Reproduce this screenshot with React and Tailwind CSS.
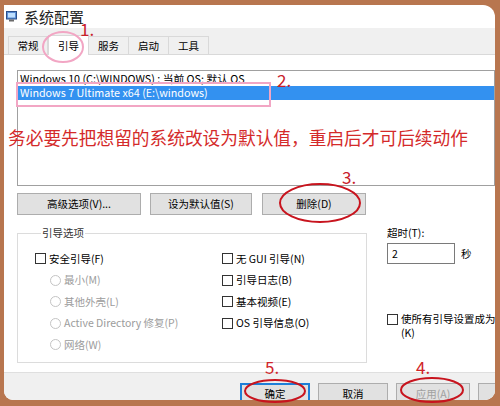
import React from "react";

const font = { fontFamily: '"Noto Sans CJK SC", "Noto Sans", sans-serif' };

function Box() {
  return <span className="inline-block w-[11px] h-[11px] border border-[#333] bg-white shrink-0" />;
}

function Radio() {
  return <span className="inline-block w-[11px] h-[11px] rounded-full border border-[#c4c4c4] bg-white shrink-0" />;
}

function Tab({ label, active }) {
  return (
    <div
      className={
        active
          ? "h-[20px] w-[41px] border border-b-0 border-[#d9d9d9] bg-white flex items-center justify-center -mb-px"
          : "h-[18px] w-[40px] border border-b-0 border-l-0 first:border-l border-[#d9d9d9] bg-[#f0f0f0] flex items-center justify-center"
      }
    >
      {label}
    </div>
  );
}

function Btn({ w, children, disabled, primary }) {
  return (
    <div
      className={
        "h-[22px] flex items-center justify-center bg-[#e1e1e1] shrink-0 " +
        (primary ? "border-2 border-[#1e7fd8] " : "border border-[#adadad] ") +
        (disabled ? "text-[#a0a0a0] " : "text-black ") +
        w
      }
    >
      {children}
    </div>
  );
}

export default function App() {
  return (
    <div className="relative w-[500px] h-[406px] bg-[#b8764f] pt-[5px] pl-[4px] pr-[5px] pb-[6px] overflow-hidden text-[10.5px] text-black" style={font}>
      <div className="h-full flex flex-col bg-white rounded-tr-[12px] rounded-bl-[9px] rounded-br-[10px] overflow-hidden">
        {/* title */}
        <div className="h-[23px] flex items-center gap-[7px] pl-[2px] shrink-0">
          <svg width="11" height="11" viewBox="0 0 11 11">
            <rect x="0.5" y="0.5" width="10" height="7.5" fill="#5b8fd6" stroke="#2b4f8a" />
            <rect x="2" y="2" width="7" height="4.5" fill="#bfe0ff" />
            <rect x="3" y="8.5" width="5" height="2" fill="#6a6a6a" />
          </svg>
          <span className="text-[15px] text-[#222] leading-none">系统配置</span>
        </div>
        {/* tabs */}
        <div className="h-[27px] bg-[#f0f0f0] border-b border-[#d9d9d9] flex items-end pl-[4px] shrink-0">
          <Tab label="常规" />
          <Tab label="引导" active />
          <Tab label="服务" />
          <Tab label="启动" />
          <Tab label="工具" />
        </div>
        {/* content */}
        <div className="h-[317px] shrink-0 bg-white pt-[15px] pl-[13px] flex flex-col">
          <div className="h-[116px] border border-[#a0a0a0] pt-[1px] leading-[14px] text-[10.75px]">
            <div className="h-[14px] pl-[2px] whitespace-nowrap">Windows 10 (C:\WINDOWS) : 当前 OS; 默认 OS</div>
            <div className="h-[14px] pl-[2px] whitespace-nowrap bg-[#3391f0] text-white">Windows 7 Ultimate x64 (E:\windows)</div>
          </div>
          <div className="flex mt-[7px]">
            <Btn w="w-[124px]">高级选项(V)...</Btn>
            <div className="w-[9px]" />
            <Btn w="w-[102px]">设为默认值(S)</Btn>
            <div className="w-[10px]" />
            <Btn w="w-[104px]">删除(D)</Btn>
          </div>
          <div className="flex mt-[10px]">
            <fieldset className="w-[350px] shrink-0 h-[138px] border border-[#dcdcdc] pl-[17px] pt-[7px]">
              <legend className="ml-[6px] px-[1px] leading-[16px] text-[#333]">引导选项</legend>
              <div className="grid grid-cols-[187px_1fr]">
                <div className="flex flex-col">
                  <div className="h-[21.5px] flex items-center gap-[3px]"><Box />安全引导(F)</div>
                  <div className="h-[21.5px] flex items-center gap-[3px] pl-[15px] text-[#9c9c9c]"><Radio />最小(M)</div>
                  <div className="h-[21.5px] flex items-center gap-[3px] pl-[15px] text-[#9c9c9c]"><Radio />其他外壳(L)</div>
                  <div className="h-[21.5px] flex items-center gap-[3px] pl-[15px] text-[#9c9c9c] whitespace-nowrap"><Radio />Active Directory 修复(P)</div>
                  <div className="h-[21.5px] flex items-center gap-[3px] pl-[15px] text-[#9c9c9c]"><Radio />网络(W)</div>
                </div>
                <div className="flex flex-col">
                  <div className="h-[21.5px] flex items-center gap-[3px]"><Box />无 GUI 引导(N)</div>
                  <div className="h-[21.5px] flex items-center gap-[3px]"><Box />引导日志(B)</div>
                  <div className="h-[21.5px] flex items-center gap-[3px]"><Box />基本视频(E)</div>
                  <div className="h-[21.5px] flex items-center gap-[3px]"><Box />OS 引导信息(O)</div>
                </div>
              </div>
            </fieldset>
            <div className="ml-[20px] flex-1 min-w-0 flex flex-col leading-[16px] overflow-hidden">
              <div>超时(T):</div>
              <div className="flex items-center mt-[2px]">
                <div className="w-[68px] h-[21px] shrink-0 border border-[#7a7a7a] pl-[4px] flex items-center">2</div>
                <span className="ml-[6px]">秒</span>
              </div>
              <div className="flex gap-[3px] mt-[48px] leading-[14px]">
                <span className="mt-[2px]"><Box /></span>
                <div>
                  <div className="whitespace-nowrap">使所有引导设置成为永久</div>
                  <div>(K)</div>
                </div>
              </div>
            </div>
          </div>
        </div>
        {/* bottom bar */}
        <div className="flex-1 bg-[#f0f0f0] border-t border-[#dfdfdf] pt-[10px] pl-[236px] flex gap-[8px] overflow-hidden">
          <Btn w="w-[70px]" primary>确定</Btn>
          <Btn w="w-[70px]">取消</Btn>
          <Btn w="w-[74px]" disabled>应用(A)</Btn>
          <Btn w="w-[74px]">帮助(H)</Btn>
        </div>
      </div>

      {/* annotations */}
      <svg className="absolute left-0 top-0 pointer-events-none" width="500" height="406">
        <ellipse cx="63" cy="47" rx="20" ry="15" fill="none" stroke="#f2a6c4" strokeWidth="2" />
        <rect x="17" y="83" width="253" height="23" fill="none" stroke="#f2a6c4" strokeWidth="2" />
        <ellipse cx="320" cy="203" rx="40" ry="19" fill="none" stroke="#c8141e" strokeWidth="2" />
        <ellipse cx="275" cy="391" rx="30" ry="11" fill="none" stroke="#c8141e" strokeWidth="2" />
        <ellipse cx="432" cy="390" rx="31" ry="12" fill="none" stroke="#c8141e" strokeWidth="2" />
      </svg>
      <span className="absolute left-[80px] top-[20px] text-[17px] leading-[18px] text-[#c8202a]">1.</span>
      <span className="absolute left-[277px] top-[71px] text-[17px] leading-[18px] text-[#c8202a]">2.</span>
      <span className="absolute left-[342px] top-[168px] text-[17px] leading-[18px] text-[#c8202a]">3.</span>
      <span className="absolute left-[416px] top-[358px] text-[17px] leading-[18px] text-[#d0252a]">4.</span>
      <span className="absolute left-[265px] top-[358px] text-[17px] leading-[18px] text-[#d0252a]">5.</span>
      <span className="absolute left-[8px] top-[126px] text-[17.7px] leading-[22px] whitespace-nowrap text-[#d42a2a]">
        务必要先把想留的系统改设为默认值，重启后才可后续动作
      </span>
    </div>
  );
}
